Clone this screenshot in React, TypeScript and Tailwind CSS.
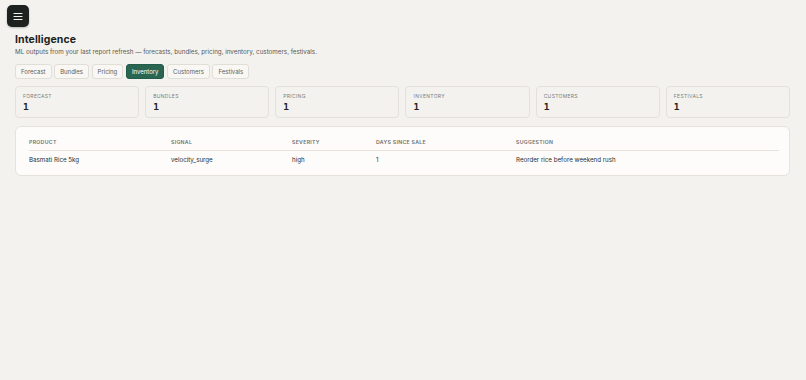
import React from "react";

const tabs = ["Forecast", "Bundles", "Pricing", "Inventory", "Customers", "Festivals"];
const stats = ["Forecast", "Bundles", "Pricing", "Inventory", "Customers", "Festivals"];

export default function App() {
  return (
    <div
      className="min-h-[380px] w-full bg-[#f4f2ee] text-[#1f2321]"
      style={{ fontFamily: "Inter, 'Noto Sans', sans-serif" }}
    >
      <div className="pl-[7px] pt-[5px]">
        <button className="flex h-[22px] w-[22px] items-center justify-center rounded-[5px] bg-[#1d2220] shadow-[0_1px_2px_rgba(0,0,0,0.25)]">
          <svg width="10" height="9" viewBox="0 0 10 9" fill="none">
            <path d="M1 1.5h8M1 4.5h8M1 7.5h8" stroke="#f4f2ee" strokeWidth="1.2" strokeLinecap="round" />
          </svg>
        </button>
      </div>
      <div className="pl-[15px] pr-[16px]">
        <h1 className="mt-[6px] text-[10.5px] font-bold leading-[13px] tracking-[0.1px] text-[#1c1f1d]">Intelligence</h1>
        <p className="mt-[2px] text-[6.25px] leading-[8px] text-[#555a57]">
          ML outputs from your last report refresh — forecasts, bundles, pricing, inventory, customers, festivals.
        </p>
        <div className="mt-[8px] flex gap-[2.6px]">
          {tabs.map((t) => (
            <div
              key={t}
              className={
                t === "Inventory"
                  ? "flex h-[15px] items-center rounded-[3px] border border-[#245c4b] bg-[#2a6552] px-[5px] text-[6px] text-white"
                  : "flex h-[15px] items-center rounded-[3px] border border-[#e1ded7] bg-[#f8f7f4] px-[5px] text-[6px] text-[#5b5f5c]"
              }
            >
              {t}
            </div>
          ))}
        </div>
        <div className="mt-[7px] grid grid-cols-6 gap-[6px]">
          {stats.map((s) => (
            <div key={s} className="h-[32px] rounded-[4px] border border-[#e4e1da] bg-[#f4f2ee] px-[7px] pt-[6px]">
              <div className="text-[5px] uppercase leading-[7px] tracking-[0.3px] text-[#7a7d7a]">{s}</div>
              <div
                className="mt-[1px] text-[9.5px] font-bold leading-[11px] text-[#222]"
                style={{ fontFamily: "'DejaVu Sans Mono', monospace" }}
              >
                1
              </div>
            </div>
          ))}
        </div>
        <div className="mt-[8px] h-[50px] rounded-[6px] border border-[#e6e3dd] bg-[#fdfcfb] pl-[13px] pr-[10px] pt-[12px]">
          <table className="w-full table-fixed border-collapse">
            <colgroup>
              <col className="w-[142px]" />
              <col className="w-[121px]" />
              <col className="w-[84px]" />
              <col className="w-[140px]" />
              <col />
            </colgroup>
            <thead>
              <tr className="border-b border-[#e6e3dd]">
                {["Product", "Signal", "Severity", "Days since sale", "Suggestion"].map((h) => (
                  <th
                    key={h}
                    className="pb-[4px] text-left text-[5.2px] font-semibold uppercase leading-[7px] tracking-[0.3px] text-[#6d716e]"
                  >
                    {h}
                  </th>
                ))}
              </tr>
            </thead>
            <tbody>
              <tr className="text-[6.2px] leading-[8px] text-[#2a2d2b]">
                <td className="pt-[5px]">Basmati Rice 5kg</td>
                <td className="pt-[5px]">velocity_surge</td>
                <td className="pt-[5px]">high</td>
                <td className="pt-[5px]">1</td>
                <td className="pt-[5px]">Reorder rice before weekend rush</td>
              </tr>
            </tbody>
          </table>
        </div>
      </div>
    </div>
  );
}
